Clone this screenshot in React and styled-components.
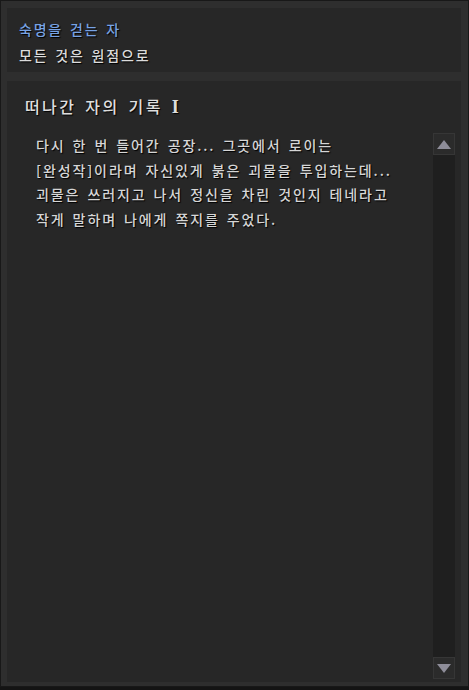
import React from 'react';
import styled, { createGlobalStyle } from "styled-components";

const Global = createGlobalStyle`
    body {
        margin: 0;
        background: #141414;
        font-family: "Noto Sans CJK KR", "Noto Sans", sans-serif;
    }
`

const Frame = styled.div`
    width: 469px;
    height: 687px;
    box-sizing: border-box;
    border: 1px solid #181818;
    background: #2e2e2e;
    padding: 7px 7px 4px 6px;
    display: flex;
    flex-direction: column;
    gap: 9px;
`

const Panel = styled.div`
    background: #272727;
    display: flex;
    flex-direction: column;
    ${p => p.$grow && 'flex: 1; min-height: 0;'}
    padding: ${p => p.$pad};
`

const Line = styled.div`
    font-size: 14px;
    line-height: 26px;
    font-weight: 500;
    letter-spacing: 1.8px;
    word-spacing: 2px;
    color: ${p => p.$color || '#dcdcdc'};
    text-shadow: 1px 1px 1px #000;
    white-space: nowrap;
`

const Title = styled.div`
    font-size: 16px;
    line-height: 20px;
    font-weight: 500;
    letter-spacing: 2.4px;
    word-spacing: 3px;
    color: #dedede;
    text-shadow: 1px 1px 1px #000;
    padding-left: 18px;
`

const Roman = styled.span`
    font-family: "Liberation Serif", serif;
    font-weight: bold;
    font-size: 18px;
`

const Body = styled.div`
    flex: 1;
    display: flex;
    margin-top: 16px;
    min-height: 0;
`

const Text = styled.div`
    flex: 1;
    padding-left: 29px;
    font-size: 14px;
    line-height: 24.5px;
    font-weight: 500;
    letter-spacing: 1.9px;
    word-spacing: 2px;
    color: #d6d6d6;
    text-shadow: 1px 1px 1px #000;
    white-space: pre;
`

const Scroll = styled.div`
    width: 22px;
    margin-right: 6px;
    background: #1f1f1f;
    display: flex;
    flex-direction: column;
    justify-content: space-between;
    margin-bottom: 3px;
`

const Arrow = styled.div`
    width: 22px;
    height: 22px;
    box-sizing: border-box;
    border: 1px solid #363636;
    background: #2b2b2b;
    display: flex;
    align-items: center;
    justify-content: center;
`

const Tri = ({ down }) => (
    <svg width="14" height="9" viewBox="0 0 14 9">
        <polygon points={down ? "0,0 14,0 7,9" : "7,0 14,9 0,9"} fill="#8e8d99" />
    </svg>
)

const lines = [
    "다시 한 번 들어간 공장... 그곳에서 로이는",
    "[완성작]이라며 자신있게 붉은 괴물을 투입하는데...",
    "괴물은 쓰러지고 나서 정신을 차린 것인지 테네라고",
    "작게 말하며 나에게 쪽지를 주었다.",
]

const App = () => {
    return (
        <>
        <Global />
        <Frame>
            <Panel $pad="8px 12px 4px">
                <Line $color="#78a3e4">숙명을 걷는 자</Line>
                <Line>모든 것은 원점으로</Line>
            </Panel>
            <Panel $grow $pad="15px 0 0">
                <Title>떠나간 자의 기록 <Roman>I</Roman></Title>
                <Body>
                    <Text>{lines.join("\n")}</Text>
                    <Scroll>
                        <Arrow><Tri /></Arrow>
                        <Arrow><Tri down /></Arrow>
                    </Scroll>
                </Body>
            </Panel>
        </Frame>
        </>
    )
}

export default App
